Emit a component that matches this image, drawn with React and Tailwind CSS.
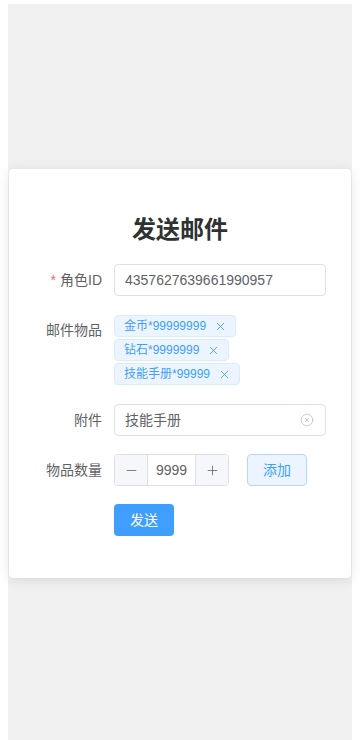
import React from "react";
import { X, CircleX, Minus, Plus } from "lucide-react";

const font = { fontFamily: '"Liberation Sans", "Noto Sans CJK SC", sans-serif' };

function Tag({ text }) {
  return (
    <span className="inline-flex items-center h-[22px] pl-[9px] pr-[8px] bg-[#ecf5ff] border border-[#d9ecff] rounded text-xs text-[#409eff]">
      {text}
      <X size={13} strokeWidth={1.6} className="ml-[8px]" />
    </span>
  );
}

function Label({ children, required }) {
  return (
    <div className="w-[105px] shrink-0 pr-3 text-right text-sm leading-8 text-[#606266]">
      {required && <span className="text-[#f56c6c] mr-1">*</span>}
      {children}
    </div>
  );
}

export default function App() {
  return (
    <div className="min-h-screen bg-white px-2 pt-1" style={font}>
      <div className="h-[736px] bg-[#f0f0f0] flex items-center px-px pt-[3px]">
        <div className="w-full bg-white rounded shadow-[0_2px_12px_0_rgba(0,0,0,0.1)] pt-[45px] pb-[42px]">
          <h2 className="text-center text-2xl leading-8 font-bold text-[#303133] mb-[18px]">
            发送邮件
          </h2>

          {/* 角色ID */}
          <div className="flex mb-[18px]">
            <Label required>角色ID</Label>
            <div className="w-[212px] h-8 border border-[#dcdfe6] rounded px-[10px] flex items-center text-sm text-[#606266]">
              4357627639661990957
            </div>
          </div>

          {/* 邮件物品 */}
          <div className="flex mb-[19px]">
            <Label>邮件物品</Label>
            <div className="flex flex-col items-start gap-[2px] pt-px">
              <Tag text="金币*99999999" />
              <Tag text="钻石*9999999" />
              <Tag text="技能手册*99999" />
            </div>
          </div>

          {/* 附件 */}
          <div className="flex mb-[18px]">
            <Label>附件</Label>
            <div className="w-[212px] h-8 border border-[#dcdfe6] rounded pl-[10px] pr-[11px] flex items-center justify-between text-sm text-[#606266]">
              <span>技能手册</span>
              <CircleX size={14} strokeWidth={1.4} className="text-[#c0c4cc]" />
            </div>
          </div>

          {/* 物品数量 */}
          <div className="flex items-center mb-[18px]">
            <Label>物品数量</Label>
            <div className="flex h-8 w-[115px] border border-[#dcdfe6] rounded overflow-hidden text-sm text-[#606266]">
              <div className="w-[33px] bg-[#f5f7fa] border-r border-[#dcdfe6] flex items-center justify-center">
                <Minus size={15} strokeWidth={1.3} />
              </div>
              <div className="flex-1 flex items-center justify-center">9999</div>
              <div className="w-[33px] bg-[#f5f7fa] border-l border-[#dcdfe6] flex items-center justify-center">
                <Plus size={15} strokeWidth={1.3} />
              </div>
            </div>
            <button className="ml-[18px] w-[60px] h-8 bg-[#ecf5ff] border border-[#b3d8ff] rounded text-sm text-[#409eff]">
              添加
            </button>
          </div>

          {/* 发送 */}
          <div className="flex">
            <div className="w-[105px] shrink-0" />
            <button className="w-[60px] h-8 bg-[#409eff] rounded text-sm text-white">
              发送
            </button>
          </div>
        </div>
      </div>
    </div>
  );
}
